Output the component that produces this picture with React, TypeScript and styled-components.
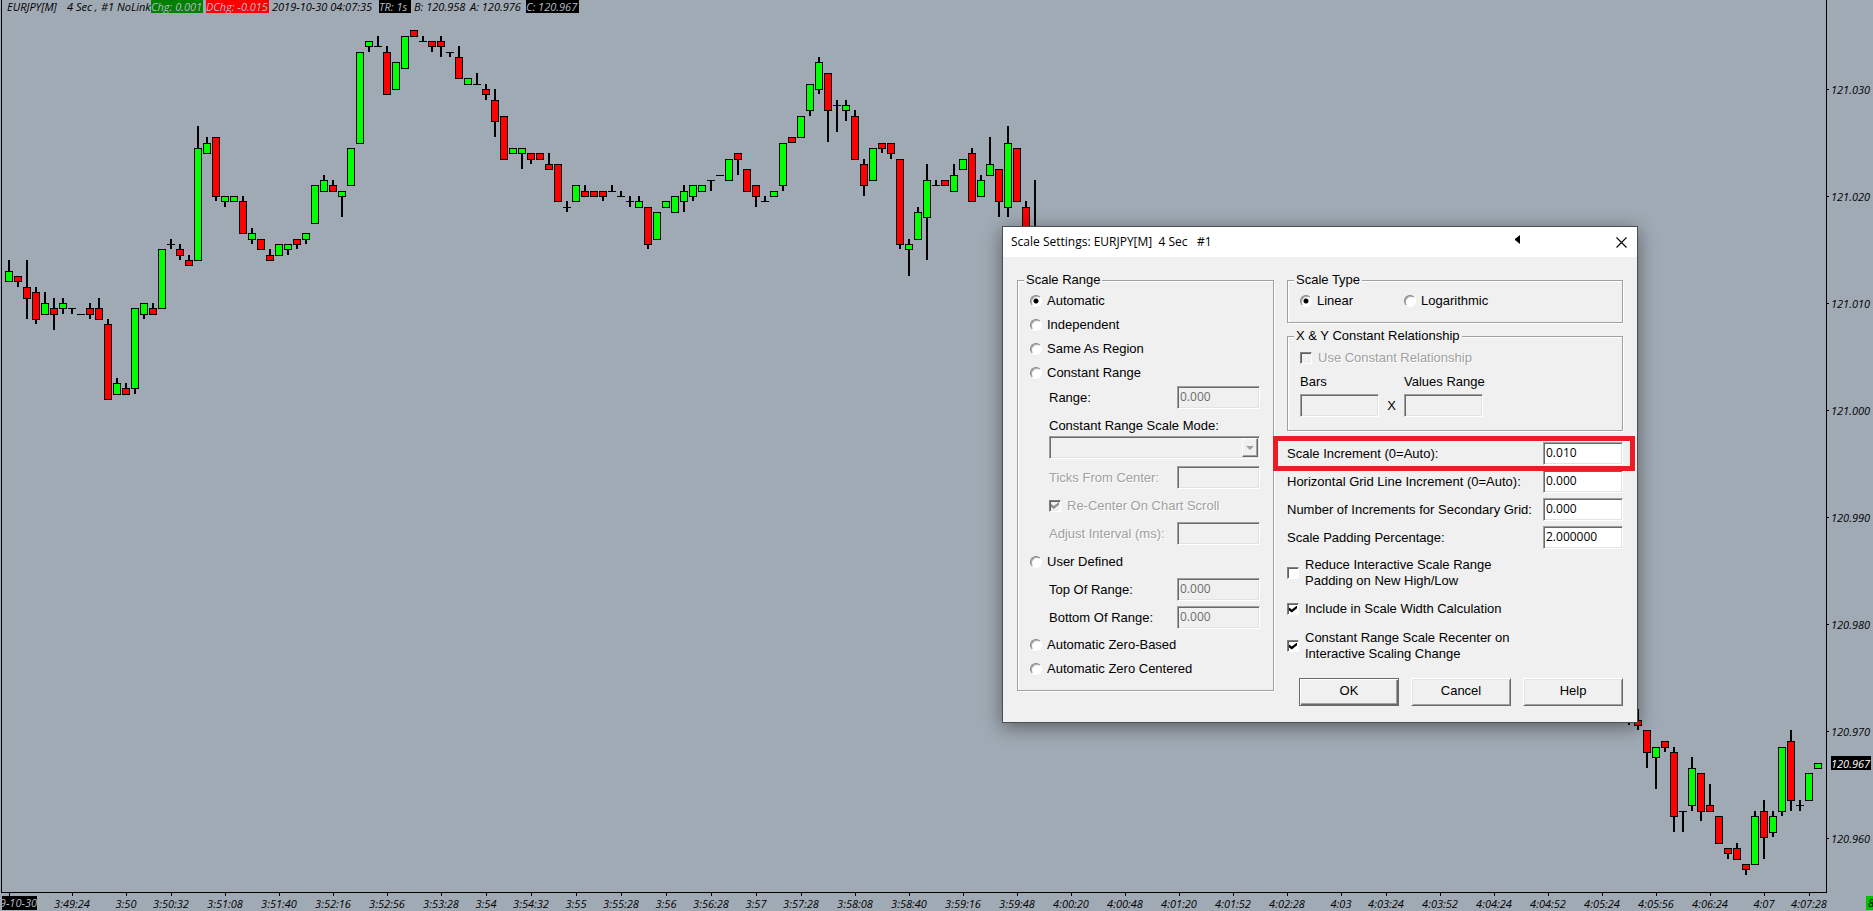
import React from 'react';
import styled, { createGlobalStyle, css } from 'styled-components';

const GlobalStyle = createGlobalStyle`
  body { margin: 0; background: #a0aab4; }
  *, *::before, *::after { box-sizing: border-box; }
`;

/* ---------- chart data ---------- */

type Candle = [index: number, kind: 'G' | 'R' | 'D', high: number, top: number, bottom: number, low: number];

const candles: Candle[] = [
  [0, 'G', 260, 271, 282, 282], [1, 'R', 276, 276, 282, 287], [2, 'R', 260, 287, 299, 319],
  [3, 'R', 287, 292, 320, 324], [4, 'G', 292, 303, 315, 315], [5, 'R', 298, 308, 315, 330],
  [6, 'G', 298, 303, 309, 314], [7, 'D', 308, 308, 309, 314], [8, 'D', 314, 314, 315, 315],
  [9, 'R', 303, 308, 315, 319], [10, 'R', 298, 308, 320, 320], [11, 'R', 319, 324, 400, 400],
  [12, 'G', 378, 383, 395, 395], [13, 'R', 383, 388, 395, 395], [14, 'G', 308, 308, 389, 394],
  [15, 'G', 303, 303, 315, 319], [16, 'R', 303, 308, 315, 315], [17, 'G', 249, 249, 309, 309],
  [18, 'D', 239, 244, 245, 249], [19, 'R', 244, 249, 256, 260], [20, 'R', 255, 260, 266, 266],
  [21, 'G', 126, 148, 261, 261], [22, 'G', 137, 143, 154, 154], [23, 'R', 137, 137, 197, 201],
  [24, 'G', 196, 196, 202, 207], [25, 'G', 196, 196, 202, 202], [26, 'R', 196, 201, 234, 234],
  [27, 'G', 228, 233, 240, 244], [28, 'R', 239, 239, 250, 250], [29, 'R', 249, 255, 261, 261],
  [30, 'G', 244, 244, 256, 256], [31, 'G', 244, 244, 250, 255], [32, 'R', 239, 239, 245, 249],
  [33, 'G', 233, 233, 240, 244], [34, 'G', 185, 185, 224, 224], [35, 'G', 175, 180, 192, 192],
  [36, 'R', 180, 185, 192, 192], [37, 'G', 191, 191, 197, 217], [38, 'G', 148, 148, 186, 186],
  [39, 'G', 52, 52, 144, 144], [40, 'G', 41, 41, 47, 52], [41, 'D', 36, 46, 47, 47],
  [42, 'R', 46, 52, 95, 95], [43, 'G', 62, 62, 90, 90], [44, 'G', 36, 36, 69, 69],
  [45, 'R', 30, 30, 37, 37], [46, 'D', 36, 41, 42, 42], [47, 'R', 41, 41, 47, 52],
  [48, 'R', 36, 41, 47, 57], [49, 'D', 52, 52, 53, 57], [50, 'R', 46, 57, 79, 79],
  [51, 'G', 78, 78, 85, 85], [52, 'D', 73, 84, 85, 85], [53, 'R', 84, 89, 95, 100],
  [54, 'R', 89, 100, 122, 137], [55, 'R', 116, 116, 160, 160], [56, 'G', 148, 148, 154, 154],
  [57, 'G', 148, 148, 154, 169], [58, 'R', 153, 153, 160, 164], [59, 'R', 153, 153, 160, 160],
  [60, 'R', 153, 164, 170, 170], [61, 'R', 164, 164, 202, 202], [62, 'D', 201, 207, 208, 212],
  [63, 'G', 185, 185, 202, 202], [64, 'R', 185, 191, 197, 197], [65, 'R', 191, 191, 197, 197],
  [66, 'R', 191, 191, 197, 201], [67, 'D', 185, 191, 192, 192], [68, 'D', 191, 196, 197, 197],
  [69, 'D', 196, 201, 202, 207], [70, 'G', 196, 201, 208, 208], [71, 'R', 207, 207, 245, 249],
  [72, 'G', 212, 212, 240, 240], [73, 'G', 201, 201, 208, 208], [74, 'G', 196, 196, 213, 213],
  [75, 'G', 185, 191, 202, 212], [76, 'G', 185, 185, 197, 201], [77, 'G', 185, 185, 192, 192],
  [78, 'D', 180, 180, 181, 191], [79, 'D', 175, 175, 176, 176], [80, 'G', 159, 159, 181, 181],
  [81, 'R', 153, 153, 160, 175], [82, 'R', 169, 169, 192, 192], [83, 'R', 185, 185, 197, 207],
  [84, 'D', 196, 201, 202, 202], [85, 'G', 191, 191, 197, 197], [86, 'G', 143, 143, 186, 191],
  [87, 'R', 137, 137, 143, 143], [88, 'G', 116, 116, 138, 138], [89, 'G', 84, 84, 111, 116],
  [90, 'G', 57, 62, 90, 94], [91, 'R', 73, 73, 111, 142], [92, 'D', 100, 105, 106, 132],
  [93, 'G', 100, 105, 111, 121], [94, 'R', 110, 116, 160, 160], [95, 'R', 159, 164, 186, 196],
  [96, 'G', 148, 148, 181, 181], [97, 'R', 143, 143, 149, 153], [98, 'R', 143, 143, 154, 159],
  [99, 'R', 159, 159, 245, 249], [100, 'G', 239, 244, 250, 276], [101, 'G', 207, 212, 240, 240],
  [102, 'G', 164, 180, 218, 260], [103, 'D', 180, 185, 186, 186], [104, 'R', 180, 180, 186, 186],
  [105, 'G', 164, 175, 192, 192], [106, 'G', 159, 159, 170, 170], [107, 'R', 148, 153, 202, 202],
  [108, 'G', 175, 180, 197, 197], [109, 'G', 137, 164, 176, 176], [110, 'R', 169, 169, 202, 217],
  [111, 'G', 126, 143, 208, 217], [112, 'R', 148, 148, 202, 202], [113, 'R', 201, 207, 240, 240],
  [114, 'R', 180, 234, 250, 260], [180, 'R', 700, 705, 715, 725], [181, 'R', 709, 720, 726, 730],
  [182, 'R', 730, 730, 753, 768], [183, 'G', 747, 747, 758, 789], [184, 'R', 741, 741, 748, 752],
  [185, 'R', 747, 752, 817, 832], [186, 'D', 811, 811, 812, 832], [187, 'G', 757, 768, 806, 811],
  [188, 'R', 773, 773, 812, 821], [189, 'R', 784, 805, 812, 812], [190, 'R', 816, 816, 844, 844],
  [191, 'R', 848, 848, 854, 859], [192, 'R', 843, 848, 860, 860], [193, 'R', 864, 864, 870, 875],
  [194, 'G', 811, 816, 865, 865], [195, 'R', 800, 811, 838, 859], [196, 'G', 811, 816, 833, 837],
  [197, 'G', 747, 747, 812, 816], [198, 'R', 730, 741, 801, 811], [199, 'D', 800, 805, 806, 811],
  [200, 'G', 773, 773, 801, 801], [201, 'G', 763, 763, 769, 769],
];

const times: [index: number, label: string][] = [
  [0, ''], [7, '3:49:24'], [13, '3:50'], [18, '3:50:32'], [24, '3:51:08'], [30, '3:51:40'],
  [36, '3:52:16'], [42, '3:52:56'], [48, '3:53:28'], [53, '3:54'], [58, '3:54:32'], [63, '3:55'],
  [68, '3:55:28'], [73, '3:56'], [78, '3:56:28'], [83, '3:57'], [88, '3:57:28'], [94, '3:58:08'],
  [100, '3:58:40'], [106, '3:59:16'], [112, '3:59:48'], [118, '4:00:20'], [124, '4:00:48'],
  [130, '4:01:20'], [136, '4:01:52'], [142, '4:02:28'], [148, '4:03'], [153, '4:03:24'],
  [159, '4:03:52'], [165, '4:04:24'], [171, '4:04:52'], [177, '4:05:24'], [183, '4:05:56'],
  [189, '4:06:24'], [195, '4:07'], [200, '4:07:28'],
];

const prices = ['121.030', '121.020', '121.010', '121.000', '120.990', '120.980', '120.970', '120.960'];

const fills = { G: '#00ff00', R: '#ff0000', D: '#000000' };
const STEP = 9;

/* ---------- chart parts ---------- */

const Page = styled.main`
  position: relative;
  display: flex;
  flex-direction: column;
  min-height: 100vh;
  background: #a0aab4;
  color: #000;
  font: italic 11px/14px 'Open Sans', 'Noto Sans', sans-serif;
  overflow: hidden;
`;

const ChartRow = styled.div`
  display: flex;
  flex: 1;
`;

const Plot = styled.section`
  position: relative;
  flex: 1;
  min-width: 0;
  margin-left: 1px;
  border: solid #000;
  border-width: 0 1px 1px;
`;

const Drawing = styled.svg<{ $height: number }>`
  display: block;
  width: 100%;
  height: ${(p) => p.$height}px;
`;

const PriceAxis = styled.aside`
  flex: 0 0 46px;
`;

const TimeAxis = styled.footer`
  position: relative;
`;

const Header = styled.header`
  position: absolute;
  top: 0;
  left: 5px;
  display: flex;
  gap: 3px;
  height: 13px;
  line-height: 13px;
  white-space: pre;
`;

const Quote = styled.span<{ $bg?: string; $width: number }>`
  width: ${(p) => p.$width}px;
  background: ${(p) => p.$bg ?? 'transparent'};
  color: ${(p) => (p.$bg ? '#b4bcc4' : '#000')};
`;

const DateTag = styled.span`
  position: absolute;
  left: 2px;
  top: 3px;
  display: flex;
  justify-content: flex-end;
  width: 35px;
  height: 14px;
  overflow: hidden;
  background: #000;
  color: #b4bcc4;
  white-space: nowrap;
`;

const CountTag = styled.span`
  position: absolute;
  right: 0;
  top: 3px;
  width: 7px;
  height: 14px;
  padding-left: 2px;
  overflow: hidden;
  background: #00c000;
`;

/* ---------- dialog parts ---------- */

const Dialog = styled.section`
  position: absolute;
  left: 1002px;
  top: 226px;
  width: 636px;
  border: 1px solid #4c5055;
  background: #f0f0f0;
  box-shadow: 0 4px 18px rgba(0, 0, 0, 0.45);
  font: normal 13px/16px 'Liberation Sans', Arial, sans-serif;
`;

const TitleBar = styled.header`
  display: flex;
  align-items: center;
  height: 30px;
  padding: 0 10px 0 8px;
  background: #fff;
`;

const Title = styled.h1`
  flex: 1;
  margin: 0;
  font: normal 12px/16px 'Open Sans', 'Noto Sans', sans-serif;
  white-space: pre;
`;

const Pointer = styled.svg`
  width: 5px;
  height: 9px;
  margin: 0 96px 6px 0;
`;

const CloseButton = styled.button`
  display: flex;
  padding: 0;
  border: 0;
  background: none;
`;

const Form = styled.form`
  display: flex;
  gap: 13px;
  padding: 15px 14px 16px;
`;

const Column = styled.div<{ $width?: number }>`
  display: flex;
  flex-direction: column;
  ${(p) => (p.$width ? css`flex: 0 0 ${p.$width}px;` : css`flex: 1;`)}
`;

const Group = styled.fieldset<{ $height: number; $gap?: number }>`
  display: flex;
  flex-direction: column;
  min-width: 0;
  height: ${(p) => p.$height}px;
  margin: ${(p) => p.$gap ?? 0}px 0 0;
  padding: 1px 13px 0 12px;
  border: 1px solid #a0a0a0;
  box-shadow: 1px 1px 0 #fff, inset 1px 1px 0 #fff;
`;

const Legend = styled.legend`
  height: 16px;
  margin-left: -6px;
  padding: 0 2px;
  background: #f0f0f0;
`;

const Row = styled.div<{ $height: number; $gap?: number; $indent?: number }>`
  display: flex;
  flex: none;
  align-items: center;
  justify-content: space-between;
  height: ${(p) => p.$height}px;
  margin-top: ${(p) => p.$gap ?? 0}px;
  padding-left: ${(p) => p.$indent ?? 0}px;
`;

const Label = styled.label<{ $off?: boolean }>`
  white-space: nowrap;
  ${(p) => p.$off && css`color: #a0a0a0; text-shadow: 1px 1px 0 #fff;`}
`;

const Choice = styled(Label)<{ $width?: number }>`
  display: flex;
  align-items: center;
  gap: 6px;
  ${(p) => p.$width && css`width: ${p.$width}px;`}
`;

const Radio = styled.input.attrs({ type: 'radio' })`
  appearance: none;
  width: 12px;
  height: 12px;
  margin: 0 -1px 0 0;
  border: 1px solid;
  border-color: #808080 #fff #fff #808080;
  border-radius: 50%;
  background: #fff;
  box-shadow: inset 1px 1px 0 #a8a8a8;
  &:checked {
    background: radial-gradient(circle, #000 2px, #fff 3px);
  }
`;

const Check = styled.input.attrs({ type: 'checkbox' })`
  appearance: none;
  flex: none;
  display: grid;
  place-items: center;
  width: 12px;
  height: 12px;
  margin: 0;
  border: 1px solid;
  border-color: #808080 #fff #fff #808080;
  background: #fff;
  box-shadow: inset 1px 1px 0 #606060;
  &:disabled { background: #f0f0f0; }
  &:checked::before {
    content: '';
    width: 8px;
    height: 7px;
    background: #000;
    clip-path: polygon(0 28%, 35% 58%, 100% 0, 100% 40%, 35% 100%, 0 70%);
  }
  &:disabled:checked::before { background: #909090; }
`;

const sunken = css`
  height: 23px;
  margin: 0;
  border: 1px solid;
  border-color: #a0a0a0 #fff #fff #a0a0a0;
  border-radius: 0;
  background: #fff;
  box-shadow: inset 1px 1px 0 #696969, inset -1px -1px 0 #e3e3e3;
  color: #000;
  font: normal 12px/16px 'Open Sans', 'Noto Sans', sans-serif;
  &:disabled { background-color: #f0f0f0; color: #6d6d6d; opacity: 1; }
`;

const Field = styled.input.attrs({ type: 'text' })<{ $width: number }>`
  ${sunken}
  flex: none;
  width: ${(p) => p.$width}px;
  padding: 0 2px 2px;
`;

const SelectBox = styled.div`
  position: relative;
  flex: 1;
`;

const Select = styled.select`
  ${sunken}
  display: block;
  width: 100%;
  appearance: none;
`;

const Arrow = styled.span`
  position: absolute;
  top: 2px;
  right: 2px;
  display: grid;
  place-items: center;
  width: 16px;
  height: 19px;
  border: 1px solid;
  border-color: #fff #696969 #696969 #fff;
  box-shadow: inset -1px -1px 0 #a0a0a0;
  pointer-events: none;
  &::before {
    content: '';
    border: solid transparent;
    border-width: 4px 4px 0;
    border-top-color: #a0a0a0;
  }
`;

const Pair = styled.div`
  display: grid;
  grid-template-columns: 79px 25px 79px;
  grid-template-rows: 24px 23px;
  align-items: center;
`;

const Times = styled.span`
  grid-column: 2;
  grid-row: 2;
  text-align: center;
`;

const Highlight = styled.div`
  position: absolute;
  left: 270px;
  top: 209px;
  width: 362px;
  height: 35px;
  border: 5px solid #ed1c24;
  pointer-events: none;
`;

const Buttons = styled.div`
  display: flex;
  justify-content: flex-end;
  gap: 12px;
  margin-top: 16px;
`;

const Button = styled.button<{ $default?: boolean }>`
  width: 100px;
  height: 28px;
  padding: 0 0 2px;
  border: 1px solid;
  border-color: ${(p) => (p.$default ? '#696969' : '#fff #696969 #696969 #fff')};
  background: #f0f0f0;
  box-shadow: ${(p) =>
    p.$default
      ? 'inset 1px 1px 0 #fff, inset -1px -1px 0 #696969, inset -2px -2px 0 #a0a0a0'
      : 'inset 1px 1px 0 #e3e3e3, inset -1px -1px 0 #a0a0a0'};
  color: #000;
  font: inherit;
`;

/* ---------- components ---------- */

function Candles() {
  return (
    <Drawing $height={892} shapeRendering="crispEdges">
      {candles.map(([i, kind, high, top, bottom, low]) => {
        const x = 9 + STEP * i - 2;
        return (
          <g key={i}>
            <rect x={x - 1} y={high} width={2} height={low - high} />
            <rect x={x - 4} y={top} width={8} height={bottom - top} />
            {kind !== 'D' && (
              <rect x={x - 3} y={top + 1} width={6} height={bottom - top - 2} fill={fills[kind]} />
            )}
          </g>
        );
      })}
    </Drawing>
  );
}

function Prices() {
  return (
    <Drawing $height={892}>
      {prices.map((price, i) => (
        <g key={price}>
          <rect x={0} y={89 + 107 * i} width={2} height={1} />
          <text x={4} y={94 + 107 * i}>{price}</text>
        </g>
      ))}
      <rect x={4} y={756} width={40} height={14} />
      <text x={4} y={768} fill="#fff">120.967</text>
    </Drawing>
  );
}

function TimeScale() {
  return (
    <TimeAxis>
      <Drawing $height={18}>
        {times.map(([i, label]) => (
          <g key={i}>
            <rect x={9 + STEP * i} y={0} width={1} height={3} />
            <text x={9 + STEP * i} y={15} textAnchor="middle">{label}</text>
          </g>
        ))}
      </Drawing>
      <DateTag>2019-10-30</DateTag>
      <CountTag>8</CountTag>
    </TimeAxis>
  );
}

type FieldLineProps = {
  id: string; label: string; value?: string; width: number;
  gap?: number; height?: number; indent?: number; off?: boolean; disabled?: boolean;
};

function FieldLine({ id, label, value = '', width, gap, height = 23, indent, off, disabled }: FieldLineProps) {
  return (
    <Row $height={height} $gap={gap} $indent={indent}>
      <Label htmlFor={id} $off={off}>{label}</Label>
      <Field id={id} $width={width} defaultValue={value} disabled={disabled} />
    </Row>
  );
}

function RangeOption({ label, checked, height = 24, gap }: { label: string; checked?: boolean; height?: number; gap?: number }) {
  return (
    <Row $height={height} $gap={gap}>
      <Choice><Radio name="range" defaultChecked={checked} />{label}</Choice>
    </Row>
  );
}

function ScaleRange() {
  return (
    <Group $height={419}>
      <Legend>Scale Range</Legend>
      <RangeOption label="Automatic" checked />
      <RangeOption label="Independent" />
      <RangeOption label="Same As Region" />
      <RangeOption label="Constant Range" />
      <FieldLine id="range" label="Range:" value="0.000" width={83} height={25} indent={19} disabled />
      <Row $height={20} $gap={6} $indent={19}><Label htmlFor="mode">Constant Range Scale Mode:</Label></Row>
      <Row $height={23} $indent={19}>
        <SelectBox><Select id="mode" disabled /><Arrow /></SelectBox>
      </Row>
      <FieldLine id="ticks" label="Ticks From Center:" width={83} gap={7} indent={19} off disabled />
      <Row $height={33} $indent={19}>
        <Choice $off><Check defaultChecked disabled />Re-Center On Chart Scroll</Choice>
      </Row>
      <FieldLine id="interval" label="Adjust Interval (ms):" width={83} indent={19} off disabled />
      <RangeOption label="User Defined" height={33} />
      <FieldLine id="top" label="Top Of Range:" value="0.000" width={83} indent={19} disabled />
      <FieldLine id="bottom" label="Bottom Of Range:" value="0.000" width={83} gap={5} indent={19} disabled />
      <RangeOption label="Automatic Zero-Based" gap={4} />
      <RangeOption label="Automatic Zero Centered" />
    </Group>
  );
}

function ScaleDialog() {
  return (
    <Dialog role="dialog" aria-label="Scale Settings">
      <TitleBar>
        <Title>{'Scale Settings: EURJPY[M]  4 Sec   #1'}</Title>
        <Pointer viewBox="0 0 5 9"><path d="M5 0v9L0 5V4z" /></Pointer>
        <CloseButton type="button" aria-label="Close">
          <svg width="11" height="11" viewBox="0 0 11 11" stroke="#000" strokeWidth="1.1">
            <path d="M.5 .5l10 10M10.5 .5l-10 10" />
          </svg>
        </CloseButton>
      </TitleBar>
      <Form onSubmit={(e) => e.preventDefault()}>
        <Column $width={257}><ScaleRange /></Column>
        <Column>
          <Group $height={51}>
            <Legend>Scale Type</Legend>
            <Row $height={24}>
              <Choice $width={104}><Radio name="type" defaultChecked />Linear</Choice>
              <Choice $width={205}><Radio name="type" />Logarithmic</Choice>
            </Row>
          </Group>
          <Group $height={103} $gap={5}>
            <Legend>X &amp; Y Constant Relationship</Legend>
            <Row $height={25}>
              <Choice $off><Check disabled />Use Constant Relationship</Choice>
            </Row>
            <Pair>
              <Label htmlFor="bars">Bars</Label>
              <span />
              <Label htmlFor="values">Values Range</Label>
              <Field id="bars" $width={79} disabled />
              <Times>X</Times>
              <Field id="values" $width={79} disabled />
            </Pair>
          </Group>
          <FieldLine id="inc" label="Scale Increment (0=Auto):" value="0.010" width={80} gap={11} />
          <FieldLine id="grid" label="Horizontal Grid Line Increment (0=Auto):" value="0.000" width={80} gap={5} />
          <FieldLine id="second" label="Number of Increments for Secondary Grid:" value="0.000" width={80} gap={5} />
          <FieldLine id="padding" label="Scale Padding Percentage:" value="2.000000" width={80} gap={5} />
          <Row $height={32} $gap={8}>
            <Choice><Check /><span>Reduce Interactive Scale Range<br />Padding on New High/Low</span></Choice>
          </Row>
          <Row $height={16} $gap={12}>
            <Choice><Check defaultChecked />Include in Scale Width Calculation</Choice>
          </Row>
          <Row $height={32} $gap={13}>
            <Choice><Check defaultChecked /><span>Constant Range Scale Recenter on<br />Interactive Scaling Change</span></Choice>
          </Row>
          <Buttons>
            <Button type="submit" $default>OK</Button>
            <Button type="button">Cancel</Button>
            <Button type="button">Help</Button>
          </Buttons>
        </Column>
      </Form>
      <Highlight />
    </Dialog>
  );
}

export default function App() {
  return (
    <>
      <GlobalStyle />
      <Page>
        <ChartRow>
          <Plot aria-label="Price chart">
            <Candles />
            <Header>
              <Quote $width={57}>EURJPY[M]</Quote>
              <Quote $width={31}>4 Sec ,</Quote>
              <Quote $width={47}>#1 NoLink</Quote>
              <Quote $width={52} $bg="#008000">Chg: 0.001</Quote>
              <Quote $width={63} $bg="#ff0000">DChg: -0.015</Quote>
              <Quote $width={104}>2019-10-30 04:07:35</Quote>
              <Quote $width={32} $bg="#000">TR: 1s</Quote>
              <Quote $width={53}>B: 120.958</Quote>
              <Quote $width={53}>A: 120.976</Quote>
              <Quote $width={53} $bg="#000">C: 120.967</Quote>
            </Header>
          </Plot>
          <PriceAxis><Prices /></PriceAxis>
        </ChartRow>
        <TimeScale />
        <ScaleDialog />
      </Page>
    </>
  );
}
